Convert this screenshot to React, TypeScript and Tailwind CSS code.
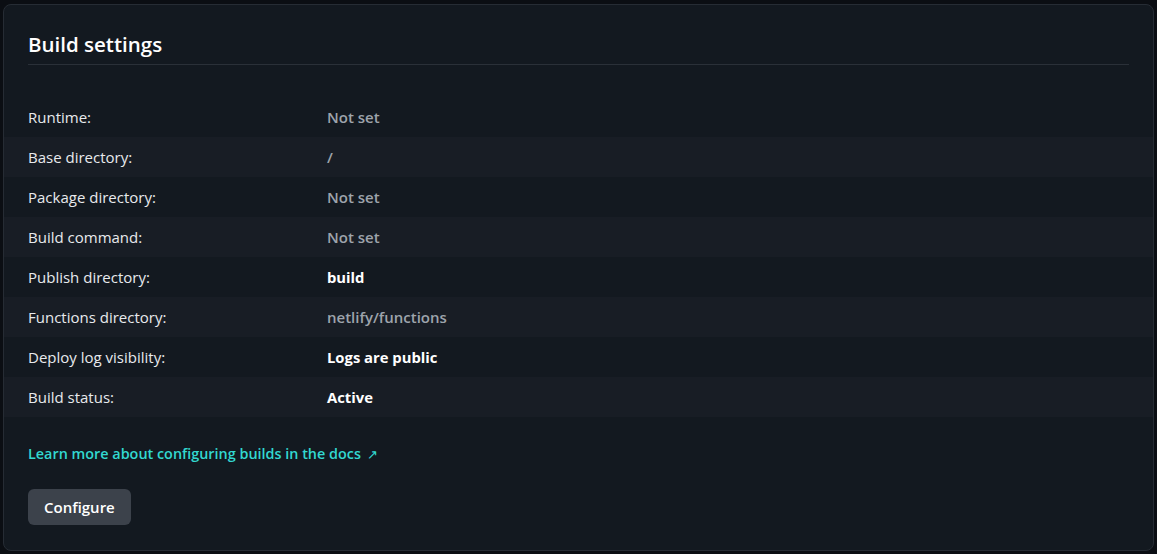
import React from "react";

const rows: { label: string; value: string; tone: "muted" | "strong" }[] = [
  { label: "Runtime:", value: "Not set", tone: "muted" },
  { label: "Base directory:", value: "/", tone: "muted" },
  { label: "Package directory:", value: "Not set", tone: "muted" },
  { label: "Build command:", value: "Not set", tone: "muted" },
  { label: "Publish directory:", value: "build", tone: "strong" },
  { label: "Functions directory:", value: "netlify/functions", tone: "muted" },
  { label: "Deploy log visibility:", value: "Logs are public", tone: "strong" },
  { label: "Build status:", value: "Active", tone: "strong" },
];

export default function App() {
  return (
    <div
      className="w-[1157px] h-[554px] bg-[#0b0e13] pt-[4px] pl-[3px] pr-[3px]"
      style={{ fontFamily: '"Open Sans", "Noto Sans", sans-serif' }}
    >
      <div className="h-[547px] rounded-lg border border-[#262c34] bg-[#131920] pt-[22px] pb-[24px]">
        <div className="mx-6">
          <h2 className="text-[20.5px] font-semibold text-white leading-[34px]">Build settings</h2>
          <div className="mt-[3px] h-px bg-[#2a3038]" />
        </div>

        <div className="mt-[32px]">
          {rows.map((r, i) => (
            <div
              key={r.label}
              className={`flex h-10 items-center px-6 text-[15px] ${
                i % 2 === 1 ? "bg-[#181d25]" : ""
              }`}
            >
              <span className="w-[299px] text-[#e8eaed]">{r.label}</span>
              <span
                className={
                  r.tone === "strong"
                    ? "font-bold text-white text-[14.8px]"
                    : "font-semibold text-[#9ea4ac]"
                }
              >
                {r.value}
              </span>
            </div>
          ))}
        </div>

        <div className="mx-6 mt-[24px]">
          <a className="text-[14.4px] font-semibold text-[#32d8d0] leading-[22px]">
            Learn more about configuring builds in the docs{" "}
            <span className="ml-[2px] font-normal text-[13px]">↗</span>
          </a>
        </div>

        <div className="mx-6 mt-[24px]">
          <button className="h-9 rounded-md bg-[#3c424b] px-4 text-[15px] font-semibold text-white">
            Configure
          </button>
        </div>
      </div>
    </div>
  );
}
